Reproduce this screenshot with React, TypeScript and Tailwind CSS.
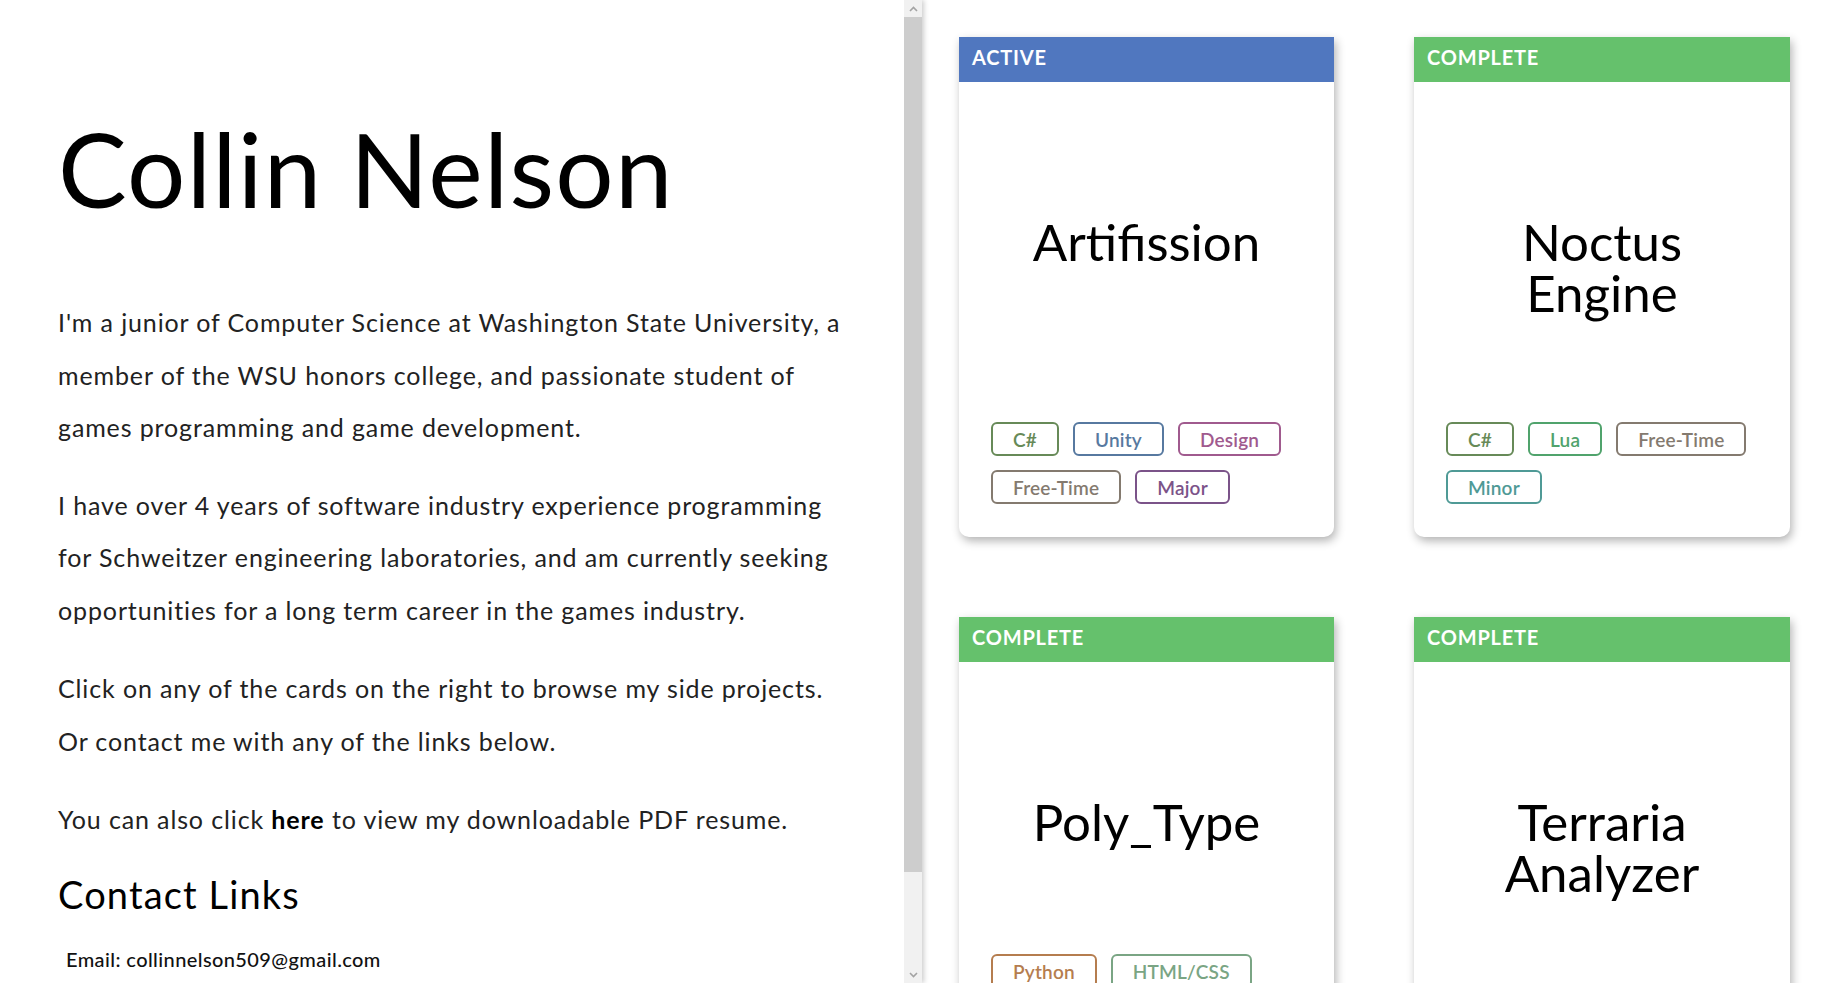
import React from "react";

type Tag = { label: string; color: string };

type Project = {
  name: string;
  status: "ACTIVE" | "COMPLETE";
  tags: Tag[];
};

const tagStyles: Record<string, string> = {
  csharp: "border-[#678a58] text-[#678a58]",
  unity: "border-[#5779a0] text-[#5779a0]",
  design: "border-[#a05a8e] text-[#a05a8e]",
  freetime: "border-[#847a6f] text-[#847a6f]",
  major: "border-[#7b5389] text-[#7b5389]",
  lua: "border-[#50a36c] text-[#50a36c]",
  minor: "border-[#4f9a96] text-[#4f9a96]",
  python: "border-[#b57d4f] text-[#b57d4f]",
  web: "border-[#7aa584] text-[#7aa584]",
  js: "border-[#b5a04f] text-[#b5a04f]",
};

const projects: Project[] = [
  {
    name: "Artifission",
    status: "ACTIVE",
    tags: [
      { label: "C#", color: "csharp" },
      { label: "Unity", color: "unity" },
      { label: "Design", color: "design" },
      { label: "Free-Time", color: "freetime" },
      { label: "Major", color: "major" },
    ],
  },
  {
    name: "Noctus Engine",
    status: "COMPLETE",
    tags: [
      { label: "C#", color: "csharp" },
      { label: "Lua", color: "lua" },
      { label: "Free-Time", color: "freetime" },
      { label: "Minor", color: "minor" },
    ],
  },
  {
    name: "Poly_Type",
    status: "COMPLETE",
    tags: [
      { label: "Python", color: "python" },
      { label: "HTML/CSS", color: "web" },
      { label: "JavaScript", color: "js" },
      { label: "Free-Time", color: "freetime" },
      { label: "Minor", color: "minor" },
    ],
  },
  {
    name: "Terraria Analyzer",
    status: "COMPLETE",
    tags: [
      { label: "C#", color: "csharp" },
      { label: "Free-Time", color: "freetime" },
      { label: "Minor", color: "minor" },
    ],
  },
];

function ProjectCard({ project }: { project: Project }) {
  const headerColor =
    project.status === "ACTIVE" ? "bg-[#5077bf]" : "bg-[#65c16c]";

  return (
    <div className="flex h-[500px] flex-col rounded-b-[10px] bg-white shadow-[2px_4px_10px_rgba(0,0,0,0.3)]">
      <div className={`h-[45px] shrink-0 pl-[13px] pt-[10px] ${headerColor}`}>
        <span className="text-[20px] font-bold leading-none tracking-[0.04em] text-white">
          {project.status}
        </span>
      </div>
      <h2 className="mt-[134px] px-8 text-center text-[51px] leading-[51px] text-black">
        {project.name}
      </h2>
      <div className="mt-auto flex flex-wrap gap-[14px] pb-[33px] pl-8 pr-4">
        {project.tags.map((tag) => (
          <span
            key={tag.label}
            className={`flex h-[34px] items-center rounded-md border-2 px-5 text-[19px] font-semibold leading-none tracking-[0.01em] ${tagStyles[tag.color]}`}
          >
            {tag.label}
          </span>
        ))}
      </div>
    </div>
  );
}

function Chevron({ up }: { up?: boolean }) {
  return (
    <svg width="9" height="6" viewBox="0 0 9 6" fill="none">
      <path
        d={up ? "M1 5L4.5 1.5L8 5" : "M1 1L4.5 4.5L8 1"}
        stroke="#a3a3a3"
        strokeWidth="1.6"
      />
    </svg>
  );
}

// classic scrollbar drawn as a column, the page is screenshotted without native bars
function Scrollbar() {
  return (
    <div className="flex h-full w-[18px] shrink-0 flex-col bg-[#f1f1f1]">
      <div className="flex h-[17px] shrink-0 items-center justify-center">
        <Chevron up />
      </div>
      <div className="h-[855px] shrink-0 bg-[#cdcdcd]" />
      <div className="flex-1" />
      <div className="flex h-[17px] shrink-0 items-center justify-center">
        <Chevron />
      </div>
    </div>
  );
}

export default function App() {
  return (
    <div className="flex h-screen overflow-hidden bg-white font-['Lato',sans-serif]">
      {/* Left: intro + its scrollbar */}
      <div className="relative z-10 flex h-full w-[922px] shrink-0 shadow-[2px_0_5px_rgba(0,0,0,0.2)]">
        <div className="h-full flex-1 overflow-hidden bg-white pl-[58px] pr-[40px]">
          <h1 className="mt-[117px] text-[103px] leading-none tracking-[0.012em] text-black">
            Collin Nelson
          </h1>

          <div className="text-[25px] leading-[52.5px] tracking-[0.035em] text-[#222]">
            <p className="mt-[76px] whitespace-nowrap">
              I'm a junior of Computer Science at Washington State University, a
              <br />
              member of the WSU honors college, and passionate student of
              <br />
              games programming and game development.
            </p>
            <p className="mt-[25px] whitespace-nowrap">
              I have over 4 years of software industry experience programming
              <br />
              for Schweitzer engineering laboratories, and am currently seeking
              <br />
              opportunities for a long term career in the games industry.
            </p>
            <p className="mt-[26px] whitespace-nowrap">
              Click on any of the cards on the right to browse my side projects.
              <br />
              Or contact me with any of the links below.
            </p>
            <p className="mt-[26px] whitespace-nowrap">
              You can also click{" "}
              <a href="#" className="font-bold text-black">
                here
              </a>{" "}
              to view my downloadable PDF resume.
            </p>
          </div>

          <h3 className="mt-[29px] text-[38px] leading-none tracking-[0.03em] text-black">
            Contact Links
          </h3>

          <p className="mt-[36px] pl-2 text-[20px] font-medium leading-none tracking-[0.02em] text-[#111]">
            Email: collinnelson509@gmail.com
          </p>
        </div>
        <Scrollbar />
      </div>

      {/* Right: project cards */}
      <div className="h-full flex-1 overflow-hidden">
        <div className="grid grid-cols-[375px_376px] gap-x-20 gap-y-20 pl-[37px] pt-[37px] pb-10">
          {projects.map((p) => (
            <ProjectCard key={p.name} project={p} />
          ))}
        </div>
      </div>
    </div>
  );
}
